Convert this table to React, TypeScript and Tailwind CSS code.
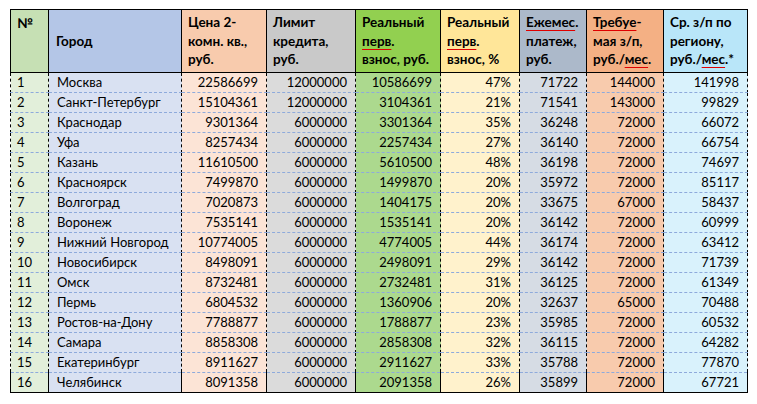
import React from "react";

type Row = [string, string, string, string, string, string, string, string, string];

const rows: Row[] = [
  ["1", "Москва", "22586699", "12000000", "10586699", "47%", "71722", "144000", "141998"],
  ["2", "Санкт-Петербург", "15104361", "12000000", "3104361", "21%", "71541", "143000", "99829"],
  ["3", "Краснодар", "9301364", "6000000", "3301364", "35%", "36248", "72000", "66072"],
  ["4", "Уфа", "8257434", "6000000", "2257434", "27%", "36140", "72000", "66754"],
  ["5", "Казань", "11610500", "6000000", "5610500", "48%", "36198", "72000", "74697"],
  ["6", "Красноярск", "7499870", "6000000", "1499870", "20%", "35972", "72000", "85117"],
  ["7", "Волгоград", "7020873", "6000000", "1404175", "20%", "33675", "67000", "58437"],
  ["8", "Воронеж", "7535141", "6000000", "1535141", "20%", "36142", "72000", "60999"],
  ["9", "Нижний Новгород", "10774005", "6000000", "4774005", "44%", "36174", "72000", "63412"],
  ["10", "Новосибирск", "8498091", "6000000", "2498091", "29%", "36142", "72000", "71739"],
  ["11", "Омск", "8732481", "6000000", "2732481", "31%", "36125", "72000", "61349"],
  ["12", "Пермь", "6804532", "6000000", "1360906", "20%", "32637", "65000", "70488"],
  ["13", "Ростов-на-Дону", "7788877", "6000000", "1788877", "23%", "35985", "72000", "60532"],
  ["14", "Самара", "8858308", "6000000", "2858308", "32%", "36115", "72000", "64282"],
  ["15", "Екатеринбург", "8911627", "6000000", "2911627", "33%", "35788", "72000", "77870"],
  ["16", "Челябинск", "8091358", "6000000", "2091358", "26%", "35899", "72000", "67721"],
];

const bodyBg = [
  "bg-[#e2efda]",
  "bg-[#d9e1f2]",
  "bg-[#fce4d6]",
  "bg-[#dbdbdb]",
  "bg-[#acd98e]",
  "bg-[#fff2cc]",
  "bg-[#d6dce4]",
  "bg-[#f8cbad]",
  "bg-[#d9f2fc]",
];

const Sp = ({ children }: { children: React.ReactNode }) => (
  <span className="underline decoration-[#e00000] decoration-1 underline-offset-[3px]">{children}</span>
);

const H = ({ bg, children, top }: { bg: string; children: React.ReactNode; top?: boolean }) => (
  <th className={`p-0 border border-black text-left align-top font-bold ${bg}`}>
    <div
      className={`h-[62px] flex flex-col pl-[6px] leading-[18.5px] ${top ? "justify-start pt-[4px]" : "justify-center"}`}
    >
      {children}
    </div>
  </th>
);

export default function App() {
  return (
    <div
      className="w-[757px] h-[404px] bg-white pl-[10px] pt-[9px] text-black"
      style={{ fontFamily: "Lato, 'Noto Sans', sans-serif" }}
    >
      <table className="table-fixed border-collapse w-[737px] text-[13px]">
        <colgroup>
          <col className="w-[38px]" />
          <col className="w-[133px]" />
          <col className="w-[85px]" />
          <col className="w-[89px]" />
          <col className="w-[85px]" />
          <col className="w-[79px]" />
          <col className="w-[67px]" />
          <col className="w-[77px]" />
          <col className="w-[84px]" />
        </colgroup>
        <thead className="text-[13.5px]">
          <tr>
            <H bg="bg-[#c6e0b4]" top>
              <span>№</span>
            </H>
            <H bg="bg-[#b4c6e7]">
              <span className="pl-[1px]">Город</span>
            </H>
            <H bg="bg-[#f8cbad]">
              <span>Цена 2-</span>
              <span>комн. кв.,</span>
              <span>руб.</span>
            </H>
            <H bg="bg-[#c9c9c9]">
              <span>Лимит</span>
              <span>кредита,</span>
              <span>руб.</span>
            </H>
            <H bg="bg-[#92d050]">
              <span>Реальный</span>
              <span>
                <Sp>перв</Sp>.
              </span>
              <span>взнос, руб.</span>
            </H>
            <H bg="bg-[#ffe699]">
              <span>Реальный</span>
              <span>
                <Sp>перв</Sp>.
              </span>
              <span>взнос, %</span>
            </H>
            <H bg="bg-[#acb9ca]">
              <span>
                <Sp>Ежемес</Sp>.
              </span>
              <span>платеж,</span>
              <span>руб.</span>
            </H>
            <H bg="bg-[#f4b084]">
              <span>
                <Sp>Требуе</Sp>-
              </span>
              <span>мая з/п,</span>
              <span>
                руб./<Sp>мес</Sp>.
              </span>
            </H>
            <H bg="bg-[#b9e6f9]">
              <span>Ср. з/п по</span>
              <span>региону,</span>
              <span>
                руб./<Sp>мес</Sp>.*
              </span>
            </H>
          </tr>
        </thead>
        <tbody>
          {rows.map((r, i) => (
            <tr key={i}>
              {r.map((c, j) => (
                <td
                  key={j}
                  className={`p-0 border-x border-x-black ${
                    i === rows.length - 1 ? "border-b border-b-black" : "border-b border-dashed border-b-[#8eaadb]"
                  } ${bodyBg[j]}`}
                >
                  <div
                    className={`h-[19px] leading-[19px] whitespace-nowrap ${
                      j === 0 ? "pl-[6px] text-left" : j === 1 ? "pl-[8px] text-left" : "pr-[8px] text-right"
                    }`}
                  >
                    {c}
                  </div>
                </td>
              ))}
            </tr>
          ))}
        </tbody>
      </table>
    </div>
  );
}
